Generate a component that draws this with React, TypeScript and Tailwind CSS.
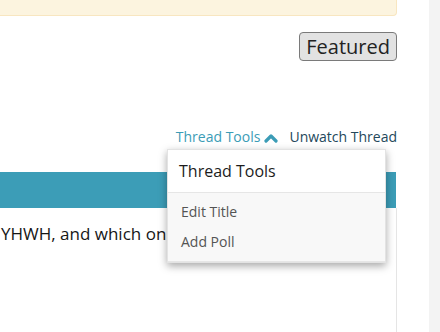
const font = { fontFamily: '"Open Sans", "DejaVu Sans", sans-serif' }

const ChevronUpBold = () => (
  <svg width="14" height="10" viewBox="0 0 14 10" fill="none" className="mt-[1px]">
    <polyline
      points="2,8 7,3 12,8"
      stroke="currentColor"
      strokeWidth="3.2"
      strokeLinecap="round"
      strokeLinejoin="round"
    />
  </svg>
)

const ThreadToolsMenu = () => (
  <div className="absolute top-full right-[11px] z-10 mt-[2px] w-[219px] border border-[#e3e3e3] bg-white shadow-[0_3px_8px_rgba(0,0,0,0.35)]">
    <div className="flex h-[43px] items-center border-b border-[#e6e6e6] px-[11px] text-[16px] text-[#1c1c1c]">
      Thread Tools
    </div>
    <ul className="bg-[#f8f8f8] pt-[4px] pb-[4px] text-[14px] text-[#545454]">
      <li className="flex h-[30px] items-center px-[13px]">Edit Title</li>
      <li className="flex h-[30px] items-center px-[13px]">Add Poll</li>
    </ul>
    <div className="h-[1px] bg-[#e6e6e6]"></div>
  </div>
)

export default function App() {
  return (
    <div className="flex h-[332px] w-[440px] overflow-hidden bg-white" style={font}>
      <div className="flex w-[397px] flex-col">
        <div className="h-[16px] rounded-br-[4px] border-r border-b border-[#f8e6c0] bg-[#fcf4df]"></div>

        <div className="mt-[16px] flex justify-end">
          <span className="flex h-[29px] items-center rounded-[4px] border border-[#7a7a7a] bg-[#e2e2e2] px-[6px] text-[20px] leading-none text-[#222]">
            Featured
          </span>
        </div>

        <div className="relative mt-[66px] flex justify-end gap-[11px] text-[14px] leading-[20px]">
          <span className="flex items-center gap-[4px] text-[#3b9cb6]">
            Thread Tools
            <ChevronUpBold />
          </span>
          <span className="text-[#24485b]">Unwatch Thread</span>
          <ThreadToolsMenu />
        </div>

        <div className="mt-[25px] h-[36px] w-[396px] bg-[#3c9db7]"></div>

        <div className="flex-1 w-[397px] border-r border-[#e5e5e5] pt-[13px]">
          <p className="ml-[1px] whitespace-nowrap text-[17px] leading-[25px] text-[#161616]">
            YHWH, and which on
          </p>
        </div>
      </div>
      <div className="w-[32px]"></div>
      <div className="w-[11px] bg-[#f3f3f3]"></div>
    </div>
  )
}
